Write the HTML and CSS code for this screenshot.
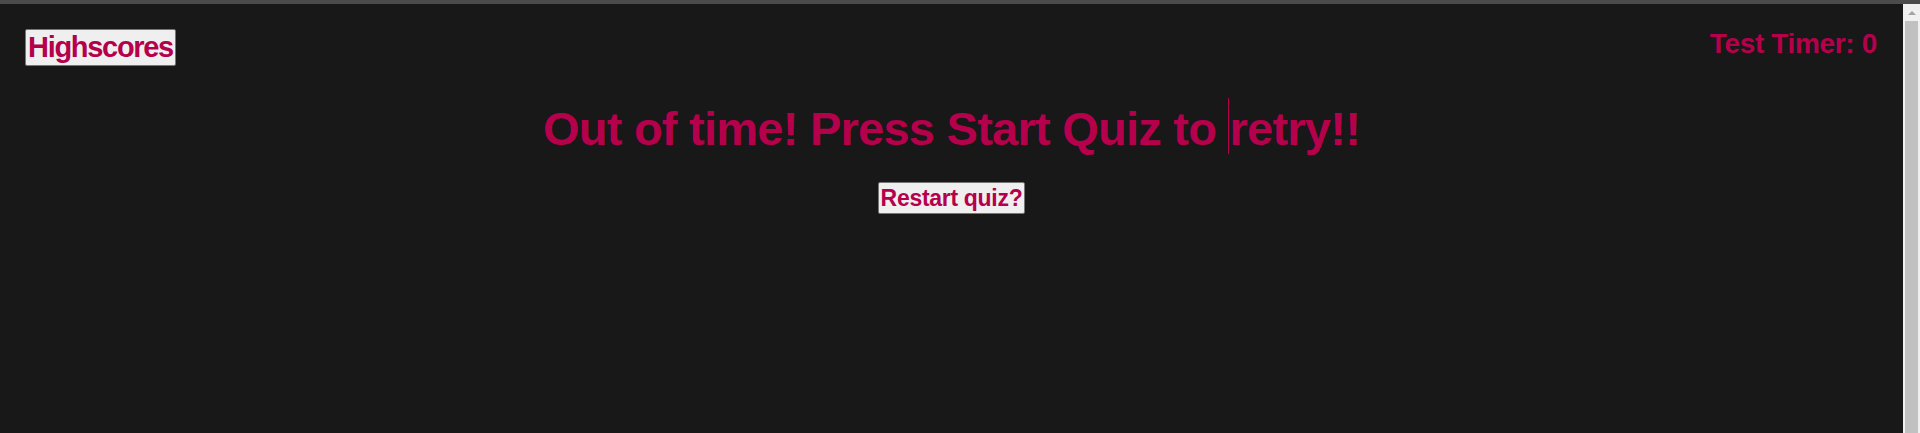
FILE: index.html
```html
<!DOCTYPE html>
<html lang="en">
<head>
<meta charset="utf-8">
<title>Quiz</title>
<link rel="stylesheet" href="styles.css">
</head>
<body>
<div class="topbar"></div>
<div class="window">
  <main class="page">
    <header class="header">
      <button class="btn btn-scores">Highscores</button>
      <div class="timer">Test Timer: 0</div>
    </header>
    <section class="content">
      <h1 class="title">Out of time! Press Start Quiz to <span class="caret"></span>retry!!</h1>
      <button class="btn btn-restart">Restart quiz?</button>
    </section>
  </main>
  <div class="scrollbar">
    <div class="arrow"></div>
    <div class="thumb"></div>
  </div>
</div>
</body>
</html>
```
FILE: styles.css
```css
html, body {
  margin: 0;
  padding: 0;
  height: 100%;
}
body {
  background: #181818;
  display: flex;
  flex-direction: column;
  overflow: hidden;
  font-family: "Liberation Sans", Arial, sans-serif;
}
.topbar {
  height: 4px;
  background: #4b4b4b;
  flex: none;
}
.window {
  flex: 1;
  display: flex;
}
.page {
  flex: 1;
  display: flex;
  flex-direction: column;
}
.header {
  display: flex;
  justify-content: space-between;
  align-items: flex-start;
  padding: 23px 26px 0 25px;
}
.btn {
  font-family: inherit;
  font-weight: bold;
  color: #b5004b;
  background: #efefef;
  border: 1px solid #767676;
  border-radius: 2px;
  padding: 0 2px;
  cursor: pointer;
}
.btn-scores {
  margin-top: 2px;
  font-size: 29px;
  letter-spacing: -1.3px;
  height: 37px;
  line-height: 35px;
}
.timer {
  margin-top: 1px;
  color: #b5004b;
  font-weight: bold;
  font-size: 28px;
  letter-spacing: -0.35px;
  line-height: 32px;
}
.content {
  display: flex;
  flex-direction: column;
  align-items: center;
}
.title {
  margin: 32px 0 0;
  color: #b5004b;
  font-size: 47px;
  letter-spacing: -0.75px;
  line-height: 56px;
  font-weight: bold;
}
.caret {
  display: inline-block;
  width: 0;
  height: 56px;
  border-left: 1px solid #b5004b;
  vertical-align: -9px;
}
.btn-restart {
  margin-top: 25px;
  font-size: 23px;
  letter-spacing: -0.3px;
  height: 32px;
  line-height: 30px;
}
.scrollbar {
  width: 17px;
  flex: none;
  background: #f0f0f0;
  display: flex;
  flex-direction: column;
  align-items: center;
}
.arrow {
  margin-top: 7px;
  width: 0;
  height: 0;
  border-left: 4px solid transparent;
  border-right: 4px solid transparent;
  border-bottom: 4px solid #a3a3a3;
}
.thumb {
  margin-top: 6px;
  width: 13px;
  flex: 1;
  background: #c1c1c1;
}
```
